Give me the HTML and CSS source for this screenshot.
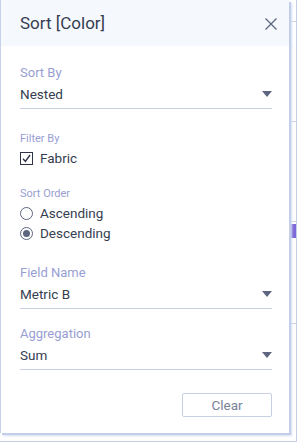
FILE: index.html
```html
<!DOCTYPE html>
<html lang="en">
<head>
    <meta charset="UTF-8">
    <title>Sort [Color]</title>
    <link rel="stylesheet" href="styles.css">
</head>
<body>
    <div class="stage">
        <!-- Worksheet behind the dialog -->
        <div class="backdrop">
            <div class="sheet-row first"></div>
            <div class="sheet-row"></div>
            <div class="sheet-row"></div>
            <div class="sheet-row"><div class="mark"></div></div>
        </div>

        <div class="dialog">
            <div class="dialog-header">
                <span class="dialog-title">Sort [Color]</span>
                <svg class="close-icon" width="12" height="12" viewBox="0 0 12 12">
                    <path d="M0.5 0.5 L11.5 11.5 M11.5 0.5 L0.5 11.5" stroke="#5c6680" stroke-width="1.3" fill="none"/>
                </svg>
            </div>

            <div class="dialog-body">
                <div class="field">
                    <div class="label">Sort By</div>
                    <div class="select">
                        <span>Nested</span>
                        <span class="caret"></span>
                    </div>
                </div>

                <div class="group filter-group">
                    <div class="label small">Filter By</div>
                    <div class="option">
                        <span class="checkbox">
                            <svg width="11" height="11" viewBox="0 0 11 11">
                                <path d="M2 5.8 L4.4 8.4 L9 2" stroke="#2e3446" stroke-width="1.4" fill="none"/>
                            </svg>
                        </span>
                        Fabric
                    </div>
                </div>

                <div class="group order-group">
                    <div class="label small">Sort Order</div>
                    <div class="option"><span class="radio"></span>Ascending</div>
                    <div class="option"><span class="radio checked"></span>Descending</div>
                </div>

                <div class="field field-name">
                    <div class="label">Field Name</div>
                    <div class="select">
                        <span>Metric B</span>
                        <span class="caret"></span>
                    </div>
                </div>

                <div class="field aggregation">
                    <div class="label">Aggregation</div>
                    <div class="select">
                        <span>Sum</span>
                        <span class="caret"></span>
                    </div>
                </div>

                <div class="actions">
                    <button class="button">Clear</button>
                </div>
            </div>
        </div>
    </div>
</body>
</html>
```

FILE: styles.css
```css
body {
    margin: 0;
    background-color: #fff;
    font-family: Roboto, "Liberation Sans", sans-serif;
    color: #363d50;
}
.stage {
    position: relative;
    width: 298px;
    height: 443px;
    overflow: hidden;
}
/* Worksheet */
.backdrop {
    width: 296px;
    height: 441px;
    border-right: 1px solid #c3cde8;
    border-bottom: 1px solid #c3cde8;
}
.sheet-row {
    height: 99px;
    border-bottom: 1px solid #cdd3e2;
}
.sheet-row.first {
    height: 21px;
}
.mark {
    margin: 2px 0 0 290px;
    width: 6px;
    height: 14px;
    background-color: #7d68d9;
}
/* Dialog */
.dialog {
    position: absolute;
    top: 0;
    left: 0;
    width: 288px;
    height: 433px;
    background-color: #fff;
    border-left: 1px solid #c6d1ec;
    box-shadow: 2px 2px 0 #c3cfea, 3px 3px 2px #d5ddf1;
}
.dialog-header {
    height: 46px;
    background-color: #f5f8fd;
    display: flex;
    align-items: center;
    justify-content: space-between;
    padding: 0 12px 0 19px;
}
.dialog-title {
    font-size: 17px;
    margin-top: -1px;
}
.close-icon {
    margin-top: 2px;
}
.dialog-body {
    padding: 19px 17px 0 19px;
}
.label {
    font-size: 13px;
    color: #989ed2;
    line-height: 16px;
}
.label.small {
    font-size: 11px;
    line-height: 14px;
}
.select {
    display: flex;
    justify-content: space-between;
    align-items: center;
    font-size: 13.5px;
    line-height: 18px;
    padding: 4px 0 5px;
    border-bottom: 1px solid #c8cfe2;
}
.caret {
    width: 0;
    height: 0;
    border-left: 5px solid transparent;
    border-right: 5px solid transparent;
    border-top: 6px solid #5c6680;
}
.filter-group {
    margin-top: 23px;
}
.order-group {
    margin-top: 19px;
}
.option {
    display: flex;
    align-items: center;
    font-size: 13.5px;
    height: 20px;
}
.label + .option {
    margin-top: 2px;
}
.checkbox {
    width: 11px;
    height: 11px;
    border: 1px solid #2e3446;
    display: flex;
    align-items: center;
    justify-content: center;
    margin-right: 7px;
}
.radio {
    box-sizing: border-box;
    width: 13px;
    height: 13px;
    border: 1px solid #5c6680;
    border-radius: 50%;
    margin-right: 7px;
    display: flex;
    align-items: center;
    justify-content: center;
}
.radio.checked::after {
    content: "";
    width: 7px;
    height: 7px;
    border-radius: 50%;
    background-color: #5c6680;
}
.field-name {
    margin-top: 22px;
}
.aggregation {
    margin-top: 17px;
}
.actions {
    display: flex;
    justify-content: flex-end;
    margin-top: 23px;
}
.button {
    width: 90px;
    height: 24px;
    background-color: #fff;
    border: 1px solid #c8cfe2;
    border-radius: 2px;
    font-family: Roboto, "Liberation Sans", sans-serif;
    font-size: 13.5px;
    color: #7a8299;
    padding: 0;
}
```
